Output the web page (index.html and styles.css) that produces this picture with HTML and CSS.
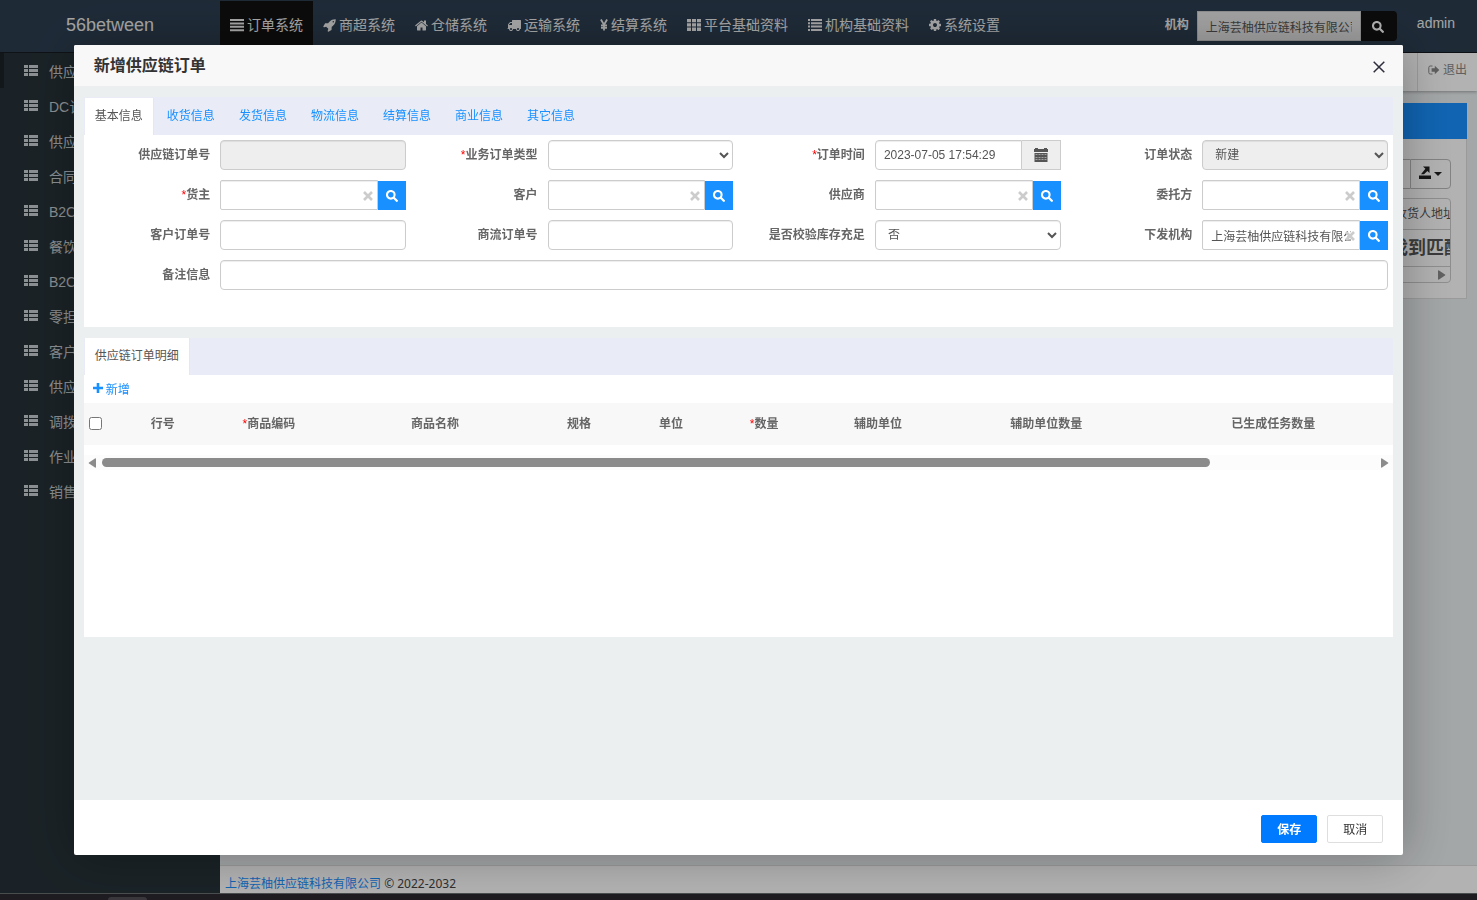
FILE: index.html
```html
<!DOCTYPE html>
<html lang="zh-CN">
<head>
<meta charset="utf-8">
<title>新增供应链订单</title>
<link rel="stylesheet" href="styles.css">
</head>
<body>
<svg class="sprite" aria-hidden="true">
  <symbol id="i-justify" viewBox="0 0 14 14"><path d="M0 1h14v2H0zM0 4.400h14v2H0zM0 7.800h14v2H0zM0 11.200h14v2H0z"/></symbol>
  <symbol id="i-thlist" viewBox="0 0 14 12"><path d="M0 0h4v3H0zM5 0h9v3H5zM0 4h4v3H0zM5 4h9v3H5zM0 8h4v3H0zM5 8h9v3H5z"/></symbol>
  <symbol id="i-th" viewBox="0 0 14 14"><path d="M0 1h4v3.300H0zM5 1h4v3.300H5zM10 1h4v3.300h-4zM0 5.300h4v3.300H0zM5 5.300h4v3.300H5zM10 5.300h4v3.300h-4zM0 9.600h4v3.300H0zM5 9.600h4v3.300H5zM10 9.600h4v3.300h-4z"/></symbol>
  <symbol id="i-list" viewBox="0 0 14 14"><path d="M0 1h2v2H0zM3 1h11v2H3zM0 4.300h2v2H0zM3 4.300h11v2H3zM0 7.600h2v2H0zM3 7.600h11v2H3zM0 10.900h2v2H0zM3 10.900h11v2H3z"/></symbol>
  <symbol id="i-yen" viewBox="0 0 8 14"><path d="M.9 1.500L4 6.800 7.100 1.500M4 6.500V12.500M1 7.500h6M1 9.800h6" fill="none" stroke="currentColor" stroke-width="1.800"/></symbol>
  <symbol id="i-rocket" viewBox="0 100 1700 1700"><path fill-rule="evenodd" d="M1440 448q0-40-28-68t-68-28-68 28-28 68 28 68 68 28 68-28 28-68zm224-288q0 249-75.500 430.500t-253.500 360.500q-81 80-195 176l-20 379q-2 16-16 26l-384 224q-7 4-16 4-12 0-23-9l-64-64q-13-14-8-32l85-276-281-281-276 85q-3 1-9 1-14 0-23-9l-64-64q-17-19-5-39l224-384q10-14 26-16l379-20q96-114 176-195 188-187 358-258t431-71q14 0 24 9.500t10 22.500z"/></symbol>
  <symbol id="i-home" viewBox="64 64 1664 1664"><path d="M1472 992v480q0 26-19 45t-45 19h-384v-384h-256v384h-384q-26 0-45-19t-19-45v-480q0-1 .5-3t.5-3l575-474 575 474q1 2 1 6zm223-69l-62 74q-8 9-21 11h-3q-13 0-21-7l-692-577-692 577q-12 8-24 7-13-2-21-11l-62-74q-8-10-7-23.500t11-21.500l719-599q32-26 76-26t76 26l244 204v-195q0-14 9-23t23-9h192q14 0 23 9t9 23v408l219 182q10 8 11 21.500t-7 23.500z"/></symbol>
  <symbol id="i-truck" viewBox="0 0 1792 1792"><path fill-rule="evenodd" d="M640 1408q0-52-38-90t-90-38-90 38-38 90 38 90 90 38 90-38 38-90zm-384-512h384v-256h-158q-13 0-22 9l-195 195q-9 9-9 22v30zm1280 512q0-52-38-90t-90-38-90 38-38 90 38 90 90 38 90-38 38-90zm256-1088v1024q0 15-4 26.500t-13.500 18.500-16.500 11.500-23.500 6-22.500 2-25.500 0-22.500-.5q0 106-75 181t-181 75-181-75-75-181h-384q0 106-75 181t-181 75-181-75-75-181h-64q-3 0-22.500.5t-25.500 0-22.500-2-23.500-6-16.500-11.500-13.500-18.500-4-26.500q0-26 19-45t45-19v-320q0-8-.5-35t0-38 2.500-34.500 6.500-37 14-30.500 22.500-30l198-198q19-19 50.500-32t58.500-13h160v-192q0-26 19-45t45-19h1024q26 0 45 19t19 45z"/></symbol>
  <symbol id="i-cog" viewBox="128 128 1536 1536"><path fill-rule="evenodd" d="M1152 896q0-106-75-181t-181-75-181 75-75 181 75 181 181 75 181-75 75-181zm512-109v222q0 12-8 23t-20 13l-185 28q-19 54-39 91 35 50 107 138 10 12 10 25t-9 23q-27 37-99 108t-94 71q-12 0-26-9l-138-108q-44 23-91 38-16 136-29 186-7 28-36 28h-222q-14 0-24.500-8.500t-11.500-21.500l-28-184q-49-16-90-37l-141 107q-10 9-25 9-14 0-25-11-126-114-165-168-7-10-7-23 0-12 8-23 15-21 51-66.500t54-70.500q-27-50-41-99l-183-27q-13-2-21-12.500t-8-23.500v-222q0-12 8-23t19-13l186-28q14-46 39-92-40-57-107-138-10-12-10-24 0-10 9-23 26-36 98.500-107.500t94.500-71.500q13 0 26 10l138 107q44-23 91-38 16-136 29-186 7-28 36-28h222q14 0 24.500 8.500t11.500 21.500l28 184q49 16 90 37l142-107q9-9 24-9 13 0 25 10 129 119 165 170 7 8 7 22 0 12-8 23-15 21-51 66.500t-54 70.500q26 50 41 98l183 28q13 2 21 12.500t8 23.500z"/></symbol>
  <symbol id="i-search" viewBox="0 0 12 12"><circle cx="4.800" cy="4.800" r="3.800" fill="none" stroke="currentColor" stroke-width="2.100"/><path d="M7.800 7.800l3 3" stroke="currentColor" stroke-width="2.300" stroke-linecap="round"/></symbol>
  <symbol id="i-clear" viewBox="0 0 10 10"><path d="M1 1l8 8M9 1L1 9" stroke="currentColor" stroke-width="2.600"/></symbol>
  <symbol id="i-calendar" viewBox="0 0 14 14"><path d="M0 1h1V0h3v1h6V0h3v1h1v3H0z"/><path fill-rule="evenodd" d="M.5 5h13v9H.5zM1.500 6.500v.6h2v-.6zM4.500 6.500v.6h2v-.6zM7.500 6.500v.6h2v-.6zM10.500 6.500v.6h2v-.6zM1.500 9v.6h2V9zM4.500 9v.6h2V9zM7.500 9v.6h2V9zM10.500 9v.6h2V9zM1.500 11.500v.6h2v-.6zM4.500 11.500v.6h2v-.6zM7.500 11.500v.6h2v-.6zM10.500 11.500v.6h2v-.6z"/></symbol>
  <symbol id="i-plus" viewBox="0 0 10 10"><path d="M3.700 0h2.600v3.700H10v2.600H6.300V10H3.700V6.300H0V3.700h3.700z"/></symbol>
  <symbol id="i-close" viewBox="0 0 12 12"><path d="M.7.700l10.600 10.600M11.300.700L.7 11.300" stroke="currentColor" stroke-width="1.500"/></symbol>
  <symbol id="i-signout" viewBox="0 0 12 10"><path d="M4.500 1H2.300Q.8 1 .8 2.500v5Q.8 9 2.300 9h2.200" fill="none" stroke="currentColor"/><path d="M3.600 3.200h3.200V.8L11.300 5 6.800 9.200V6.800H3.600z"/></symbol>
  <symbol id="i-export" viewBox="0 0 12 13"><path d="M0 9.500h12V13H0z"/><path d="M4 .5h6.500V7L8.400 4.900 5 8.300H2l4.400-5.500z"/></symbol>
  <symbol id="i-right" viewBox="0 0 8 10"><path d="M0 1Q0 0 1 .5l6 4q.8.500 0 1l-6 4Q0 10 0 9z"/></symbol>
  <symbol id="i-left" viewBox="0 0 8 10"><path d="M8 1Q8 0 7 .5l-6 4q-.8.500 0 1l6 4Q8 10 8 9z"/></symbol>
</svg>

<div class="app">
  <header class="top">
    <a class="brand" href="#">56between</a>
    <nav class="menu">
      <a class="on" href="#"><svg width="14" height="14"><use href="#i-justify"/></svg>订单系统</a>
      <a href="#"><svg width="13" height="13"><use href="#i-rocket"/></svg>商超系统</a>
      <a href="#"><svg width="13" height="13"><use href="#i-home"/></svg>仓储系统</a>
      <a href="#"><svg width="14" height="14"><use href="#i-truck"/></svg>运输系统</a>
      <a href="#"><svg width="8" height="14"><use href="#i-yen"/></svg>结算系统</a>
      <a href="#"><svg width="14" height="14"><use href="#i-th"/></svg>平台基础资料</a>
      <a href="#"><svg width="14" height="14"><use href="#i-list"/></svg>机构基础资料</a>
      <a href="#"><svg width="12" height="12"><use href="#i-cog"/></svg>系统设置</a>
    </nav>
    <div class="org">
      <label for="org">机构</label>
      <input id="org" type="text" value="上海芸柚供应链科技有限公司">
      <button type="button" aria-label="搜索机构"><svg width="12" height="12"><use href="#i-search"/></svg></button>
    </div>
    <a class="user" href="#">admin</a>
  </header>

  <div class="body">
    <aside class="side">
      <a class="on" href="#"><svg width="14" height="12"><use href="#i-thlist"/></svg>供应链订单</a>
      <a href="#"><svg width="14" height="12"><use href="#i-thlist"/></svg>DC订单</a>
      <a href="#"><svg width="14" height="12"><use href="#i-thlist"/></svg>供应商订单</a>
      <a href="#"><svg width="14" height="12"><use href="#i-thlist"/></svg>合同订单</a>
      <a href="#"><svg width="14" height="12"><use href="#i-thlist"/></svg>B2C订单</a>
      <a href="#"><svg width="14" height="12"><use href="#i-thlist"/></svg>餐饮订单</a>
      <a href="#"><svg width="14" height="12"><use href="#i-thlist"/></svg>B2C退单</a>
      <a href="#"><svg width="14" height="12"><use href="#i-thlist"/></svg>零担订单</a>
      <a href="#"><svg width="14" height="12"><use href="#i-thlist"/></svg>客户订单</a>
      <a href="#"><svg width="14" height="12"><use href="#i-thlist"/></svg>供应链任务</a>
      <a href="#"><svg width="14" height="12"><use href="#i-thlist"/></svg>调拨订单</a>
      <a href="#"><svg width="14" height="12"><use href="#i-thlist"/></svg>作业订单</a>
      <a href="#"><svg width="14" height="12"><use href="#i-thlist"/></svg>销售订单</a>
    </aside>
    <main class="main">
      <div class="tabsbar"><a class="exit" href="#"><svg width="12" height="10"><use href="#i-signout"/></svg>退出</a></div>
      <section class="panel">
        <div class="panel-head"></div>
        <div class="panel-body">
          <div class="tools">
            <button class="cols" type="button" aria-label="列"><svg width="14" height="12"><use href="#i-thlist"/></svg><span class="caret"></span></button>
            <button type="button" aria-label="导出"><svg width="12" height="13"><use href="#i-export"/></svg><span class="caret"></span></button>
          </div>
          <div class="grid">
            <div class="grid-head"><span>收货人地址</span></div>
            <div class="grid-empty"><span>没有找到匹配的记录</span></div>
            <div class="grid-scroll"><svg width="8" height="10"><use href="#i-right"/></svg></div>
          </div>
        </div>
      </section>
      <footer class="foot"><a href="#">上海芸柚供应链科技有限公司</a> © 2022-2032</footer>
    </main>
  </div>
</div>

<div class="mask">
  <div class="modal" role="dialog" aria-labelledby="dlg-title">
    <div class="modal-head">
      <h1 id="dlg-title">新增供应链订单</h1>
      <button type="button" aria-label="关闭"><svg width="12" height="12"><use href="#i-close"/></svg></button>
    </div>
    <div class="modal-body">
      <section class="card">
        <nav class="tabs">
          <a class="on" href="#">基本信息</a><a href="#">收货信息</a><a href="#">发货信息</a><a href="#">物流信息</a><a href="#">结算信息</a><a href="#">商业信息</a><a href="#">其它信息</a>
        </nav>
        <form class="form">
          <label for="f1">供应链订单号</label>
          <input id="f1" type="text" disabled>
          <label for="f2"><i>*</i>业务订单类型</label>
          <select id="f2"><option></option></select>
          <label for="f3"><i>*</i>订单时间</label>
          <div class="group"><input id="f3" type="text" value="2023-07-05 17:54:29"><button class="addon" type="button" aria-label="选择日期"><svg width="14" height="14"><use href="#i-calendar"/></svg></button></div>
          <label for="f4">订单状态</label>
          <select id="f4" disabled><option>新建</option></select>

          <label for="f5"><i>*</i>货主</label>
          <div class="group pick"><input id="f5" type="text"><svg class="clear" width="10" height="10"><use href="#i-clear"/></svg><button type="button" aria-label="选择货主"><svg width="12" height="12"><use href="#i-search"/></svg></button></div>
          <label for="f6">客户</label>
          <div class="group pick"><input id="f6" type="text"><svg class="clear" width="10" height="10"><use href="#i-clear"/></svg><button type="button" aria-label="选择客户"><svg width="12" height="12"><use href="#i-search"/></svg></button></div>
          <label for="f7">供应商</label>
          <div class="group pick"><input id="f7" type="text"><svg class="clear" width="10" height="10"><use href="#i-clear"/></svg><button type="button" aria-label="选择供应商"><svg width="12" height="12"><use href="#i-search"/></svg></button></div>
          <label for="f8">委托方</label>
          <div class="group pick"><input id="f8" type="text"><svg class="clear" width="10" height="10"><use href="#i-clear"/></svg><button type="button" aria-label="选择委托方"><svg width="12" height="12"><use href="#i-search"/></svg></button></div>

          <label for="f9">客户订单号</label>
          <input id="f9" type="text">
          <label for="f10">商流订单号</label>
          <input id="f10" type="text">
          <label for="f11">是否校验库存充足</label>
          <select id="f11"><option>否</option></select>
          <label for="f12">下发机构</label>
          <div class="group pick"><input id="f12" type="text" value="上海芸柚供应链科技有限公司"><svg class="clear" width="10" height="10"><use href="#i-clear"/></svg><button type="button" aria-label="选择机构"><svg width="12" height="12"><use href="#i-search"/></svg></button></div>

          <label for="f13">备注信息</label>
          <input id="f13" class="wide" type="text">
        </form>
      </section>

      <section class="card detail">
        <nav class="tabs"><a class="on" href="#">供应链订单明细</a></nav>
        <button class="add" type="button"><svg width="10" height="10"><use href="#i-plus"/></svg>新增</button>
        <div class="table-wrap">
          <table>
            <colgroup><col class="c23"><col class="c112"><col class="c100"><col class="c232"><col class="c56"><col class="c128"><col class="c58"><col class="c170"><col class="c166"><col class="c288"><col class="c172"></colgroup>
            <thead><tr>
              <th><input type="checkbox" aria-label="全选"></th><th>行号</th><th><i>*</i>商品编码</th><th>商品名称</th><th>规格</th><th>单位</th><th><i>*</i>数量</th><th>辅助单位</th><th>辅助单位数量</th><th>已生成任务数量</th><td></td>
            </tr></thead>
          </table>
        </div>
        <div class="scroll">
          <svg width="8" height="10"><use href="#i-left"/></svg>
          <div class="track"><div class="thumb"></div></div>
          <svg width="8" height="10"><use href="#i-right"/></svg>
        </div>
      </section>
    </div>
    <div class="modal-foot">
      <button class="primary" type="button">保存</button>
      <button type="button">取消</button>
    </div>
  </div>
</div>
<div class="strip"><div class="notch"></div></div>
</body>
</html>
```

FILE: styles.css
```css
* { box-sizing: border-box; }
body, input, select, button {
  font-family: "Liberation Sans", "Noto Sans CJK SC", sans-serif;
  font-size: 12px;
}
body { margin: 0; color: #555; line-height: 18px; }
a { text-decoration: none; color: #1890ff; }
svg { fill: currentColor; flex: none; display: block; }
i { font-style: normal; font-weight: 400; color: red; }
input, select { color: #555; }
button { cursor: pointer; }
.sprite { position: absolute; width: 0; height: 0; }

.app { height: 100vh; display: flex; flex-direction: column; padding-bottom: 7px; overflow: hidden; }

.top { height: 53px; flex: none; display: flex; align-items: flex-start; background: #2c3e50; border-bottom: 1px solid #161a20; }
.brand { width: 220px; line-height: 50px; font-size: 18px; text-align: center; color: #eee; }
.menu { display: flex; flex: 1; padding-top: 1px; }
.menu a { display: flex; align-items: center; gap: 3px; height: 50px; padding: 0 10px 2px; font-size: 14px; color: #eee; white-space: nowrap; }
.menu .on { background: #111; }
.org { display: flex; align-items: center; margin-top: 11px; }
.org label { font-weight: 700; color: #eee; padding: 0 8px 2px 0; }
.org input { width: 164px; height: 30px; padding: 0 8px; border: 1px solid #ccc; background: #e8e8e8; }
.org button { width: 36px; height: 30px; padding: 2px 2px 0 0; border: 0; border-radius: 0 4px 4px 0; background: #111; color: #fff; display: flex; align-items: center; justify-content: center; }
.user { font-size: 14px; line-height: 46px; padding: 0 22px 0 20px; color: #eee; }

.body { flex: 1; display: flex; min-height: 0; }
.side { width: 220px; flex: none; background: #263238; }
.side a { display: flex; align-items: center; gap: 11px; height: 35px; padding: 2px 0 0 20px; border-left: 4px solid transparent; color: #c8ced2; font-size: 14px; }
.side svg { margin-bottom: 2px; }
.side .on { border-left-color: #1a2226; }
.main { flex: 1; min-width: 0; background: #ebeff0; display: flex; flex-direction: column; }
.tabsbar { height: 38px; flex: none; background: #fff; display: flex; justify-content: flex-end; box-shadow: 0 1px 3px rgba(0, 0, 0, .3); }
.exit { display: flex; align-items: center; gap: 3px; padding: 0 10px 4px; border-left: 1px solid #e0e0e0; color: #888; }
.panel { margin: 12px 10px 0; background: #fff; border: 1px solid #ddd; border-top: 0; }
.panel-head { height: 36px; background: #1890ff; margin-right: -1px; }
.panel-body { padding: 20px 15px 15px; }
.tools { display: flex; justify-content: flex-end; }
.tools button { width: 41px; height: 30px; padding: 0 8px 4px; display: flex; align-items: center; justify-content: space-between; background: #fff; border: 1px solid #bbb; border-radius: 0 4px 4px 0; color: #222; }
.tools .cols { border-right: 0; border-radius: 0; }
.caret { border: 4px solid transparent; border-top-color: #222; border-bottom: 0; margin-top: 3px; }
.grid { margin-top: 9px; border: 1px solid #ccc; border-radius: 0 4px 4px 0; overflow: hidden; text-align: right; white-space: nowrap; }
.grid-head { height: 31px; line-height: 30px; border-bottom: 1px solid #ccc; margin-right: -5px; }
.grid-empty { height: 37px; line-height: 36px; border-bottom: 1px solid #ccc; font-size: 18px; font-weight: 700; margin-right: -66px; }
.grid-scroll { height: 15px; display: flex; align-items: center; justify-content: flex-end; padding-right: 4px; color: #8b8b8b; }
.foot { margin-top: auto; height: 28px; padding: 8px 5px 0; background: #fff; border-top: 1px solid #ddd; line-height: 20px; color: #444; font-family: "Noto Sans", "Noto Sans CJK SC", sans-serif; }

.mask { position: fixed; inset: 0; background: rgba(0, 0, 0, .3); display: flex; align-items: center; justify-content: center; }
.modal { width: 90%; height: 90%; background: #fff; border-radius: 2px; box-shadow: 1px 1px 50px rgba(0, 0, 0, .3); display: flex; flex-direction: column; overflow: hidden; }
.modal-head { height: 41px; flex: none; display: flex; align-items: center; justify-content: space-between; padding: 0 18px 0 20px; background: #f8f8f8; }
h1 { margin: 0; font-size: 16px; line-height: 24px; font-weight: 700; color: #333; }
.modal-head button { border: 0; background: none; padding: 3px 0 0; color: #2e2d3c; }
.modal-body { flex: 1; min-height: 0; padding: 11px 10px; background: #ebeff0; }
.card { background: #fff; }
.detail { margin-top: 11px; height: 299px; }
.tabs { display: flex; gap: 2px; height: 38px; background: #e9ecf6; padding: 1px 0 0 1px; }
.detail .tabs { height: 37px; padding-top: 0; }
.tabs a { padding: 0 10px; line-height: 37px; border-right: 1px solid transparent; }
.tabs a + a { border-left: 1px solid transparent; }
.tabs .on { background: #fff; color: #555; border-right-color: #e4e7ec; }

.form { display: grid; grid-template-columns: repeat(4, minmax(0, 5fr) minmax(0, 7fr)); row-gap: 10px; padding: 5px 0 37px; }
.form label { font-weight: 700; color: #666; text-align: right; line-height: 30px; padding-right: 10px; white-space: nowrap; }
.form input, .form select { height: 30px; min-width: 0; padding: 0 8px; background: #fff; border: 1px solid #ccc; border-radius: 4px; box-shadow: inset 0 1px 1px rgba(0, 0, 0, .075); }
.form > input, .form > select, .group { margin-right: 5px; }
.form input:disabled, .form select:disabled { background: #eee; opacity: 1; color: #555; }
.form .wide { grid-column: span 7; }
.group { display: flex; align-items: flex-end; min-width: 0; position: relative; }
.group input { flex: 1; width: 0; border-radius: 4px 0 0 4px; }
.form .pick input { border-radius: 2px 0 0 2px; }
.group button { height: 29px; width: 28px; border: 0; padding: 0; background: #1890ff; color: #fff; display: flex; align-items: center; justify-content: center; }
.group .addon { height: 30px; width: 39px; border: 1px solid #ccc; border-left: 0; background: #eee; color: #555; }
.form .group:not(.pick) input { border-radius: 4px 0 0 4px; }
.clear { position: absolute; right: 33px; top: 11px; color: #ccc; }

.add { display: flex; align-items: center; gap: 3px; height: 28px; padding: 0 9px 2px; border: 0; background: none; color: #1890ff; }
.table-wrap { overflow: hidden; }
table { width: 115%; table-layout: fixed; border-collapse: collapse; }
th, td { height: 42px; padding: 0; background: #f8f8f8; text-align: center; font-weight: 700; color: #666; white-space: nowrap; }
th input { display: block; width: 13px; height: 13px; margin: 0 0 1px 5px; }
.c23 { width: 23px; } .c112 { width: 112px; } .c100 { width: 100px; } .c232 { width: 232px; }
.c56 { width: 56px; } .c128 { width: 128px; } .c58 { width: 58px; } .c170 { width: 170px; }
.c166 { width: 166px; } .c288 { width: 288px; } .c172 { width: 172px; }
.scroll { display: flex; align-items: center; gap: 6px; height: 15px; margin-top: 10px; padding: 0 4px; background: #fcfcfc; color: #8b8b8b; }
.track { flex: 1; }
.thumb { width: 87%; height: 9px; border-radius: 5px; background: #8b8b8b; }

.modal-foot { height: 55px; flex: none; display: flex; justify-content: flex-end; gap: 10px; padding: 15px 20px 0; }
.modal-foot button { width: 56px; height: 28px; padding: 0 0 2px; border: 1px solid #dedede; border-radius: 2px; background: #fff; color: #333; }
.modal-foot .primary { background: #007bff; border-color: #007bff; color: #fff; font-weight: 700; }

.strip { position: fixed; left: 0; right: 0; bottom: 0; height: 7px; background: #1e1b21; border-top: 1px solid #4a4d4e; }
.notch { width: 39px; height: 3px; margin: 3px 0 0 108px; border-radius: 3px 3px 0 0; background: #39363c; }
```
